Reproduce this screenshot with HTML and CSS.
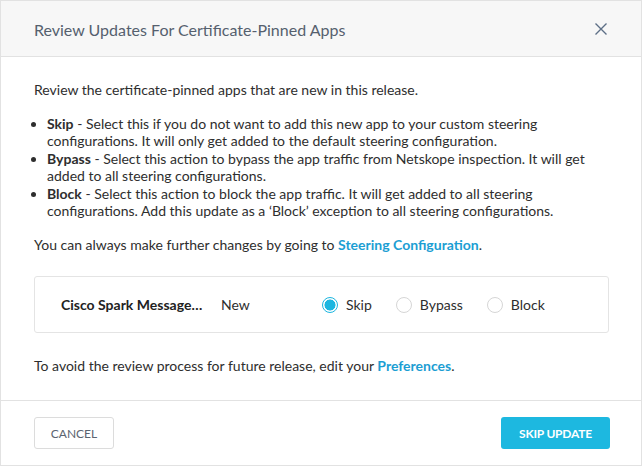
FILE: index.html
```html
<!DOCTYPE html>
<html>
<head>
<meta charset="utf-8">
<link rel="stylesheet" href="styles.css">
</head>
<body>
<div class="dialog">
  <div class="header">
    <h1 class="title">Review Updates For Certificate-Pinned Apps</h1>
    <button class="close" aria-label="Close">
      <svg width="12" height="12" viewBox="0 0 12 12"><path d="M0.5 0.5 L11.5 11.5 M11.5 0.5 L0.5 11.5" stroke="#5d6f86" stroke-width="1.4" fill="none"/></svg>
    </button>
  </div>
  <div class="body">
    <p class="intro">Review the certificate-pinned apps that are new in this release.</p>
    <ul class="list">
      <li><b>Skip</b> - Select this if you do not want to add this new app to your custom steering configurations. It will only get added to the default steering configuration.</li>
      <li><b>Bypass</b> - Select this action to bypass the app traffic from Netskope inspection. It will get added to all steering configurations.</li>
      <li><b>Block</b> - Select this action to block the app traffic. It will get added to all steering configurations. Add this update as a ‘Block’ exception to all steering configurations.</li>
    </ul>
    <p class="note">You can always make further changes by going to <a class="link">Steering Configuration</a>.</p>
    <div class="card">
      <span class="app">Cisco Spark Messages for Teams</span>
      <span class="status">New</span>
      <div class="radios">
        <label class="radio"><span class="dot on"></span>Skip</label>
        <label class="radio"><span class="dot"></span>Bypass</label>
        <label class="radio"><span class="dot"></span>Block</label>
      </div>
    </div>
    <p class="pref">To avoid the review process for future release, edit your <a class="link">Preferences</a>.</p>
  </div>
  <div class="footer">
    <button class="btn cancel">CANCEL</button>
    <button class="btn primary">SKIP UPDATE</button>
  </div>
</div>
</body>
</html>
```

FILE: styles.css
```css
* { box-sizing: border-box; }
html, body { margin: 0; padding: 0; background: #fff; }
body {
  font-family: Lato, "Open Sans", sans-serif;
  font-size: 14px;
  color: #2e2e2e;
}
.dialog {
  width: 642px;
  height: 466px;
  border: 1px solid #e2e2e2;
  display: flex;
  flex-direction: column;
}
.header {
  height: 56px;
  background: #f7f7f7;
  border-bottom: 1px solid #e2e2e2;
  display: flex;
  align-items: center;
  justify-content: space-between;
  padding: 0 34px 0 33px;
}
.title {
  margin: 0;
  font-size: 16px;
  font-weight: 400;
  color: #55606e;
  margin-top: 2px;
}
.close {
  border: 0;
  background: none;
  padding: 0;
  width: 12px;
  height: 12px;
  display: flex;
  margin-top: 1px;
}
.body {
  flex: 1;
  padding: 24px 32px 0 33px;
  line-height: 17.5px;
  border-bottom: 1px solid #e2e2e2;
}
.body p { margin: 0; }
.list {
  margin: 16px 0 0 0;
  padding: 0 0 0 13px;
}
.list b { font-weight: 700; }
.note { margin-top: 16px !important; }
.link { color: #1c9ed3; font-weight: 700; }
.card {
  margin-top: 23px;
  height: 57px;
  border: 1px solid #e4e4e4;
  border-radius: 3px;
  display: flex;
  align-items: center;
  padding-left: 26px;
}
.app {
  width: 146px;
  white-space: nowrap;
  overflow: hidden;
  text-overflow: ellipsis;
  font-weight: 700;
  color: #222;
}
.status {
  margin-left: 14px;
  width: 101px;
}
.radios { display: flex; }
.radio {
  display: flex;
  align-items: center;
  margin-right: 24px;
}
.dot {
  width: 16px;
  height: 16px;
  border-radius: 50%;
  border: 1px solid #d6d6d6;
  margin-right: 8px;
  background: #fff;
}
.dot.on {
  border: 1.5px solid #1cb6e0;
  background: radial-gradient(circle, #1cb6e0 0 5.2px, #fff 5.8px);
}
.pref { margin-top: 24px !important; }
.footer {
  height: 64px;
  display: flex;
  align-items: center;
  justify-content: space-between;
  padding: 0 31px 0 33px;
}
.btn {
  height: 32px;
  border-radius: 3px;
  font-family: Lato, sans-serif;
  font-size: 12px;
  padding: 0;
}
.cancel {
  width: 80px;
  background: #fff;
  border: 1px solid #dcdcdc;
  color: #5b6470;
}
.primary {
  width: 109px;
  background: #1db8e0;
  border: 0;
  color: #fff;
  font-weight: 700;
  letter-spacing: -0.2px;
}
```
